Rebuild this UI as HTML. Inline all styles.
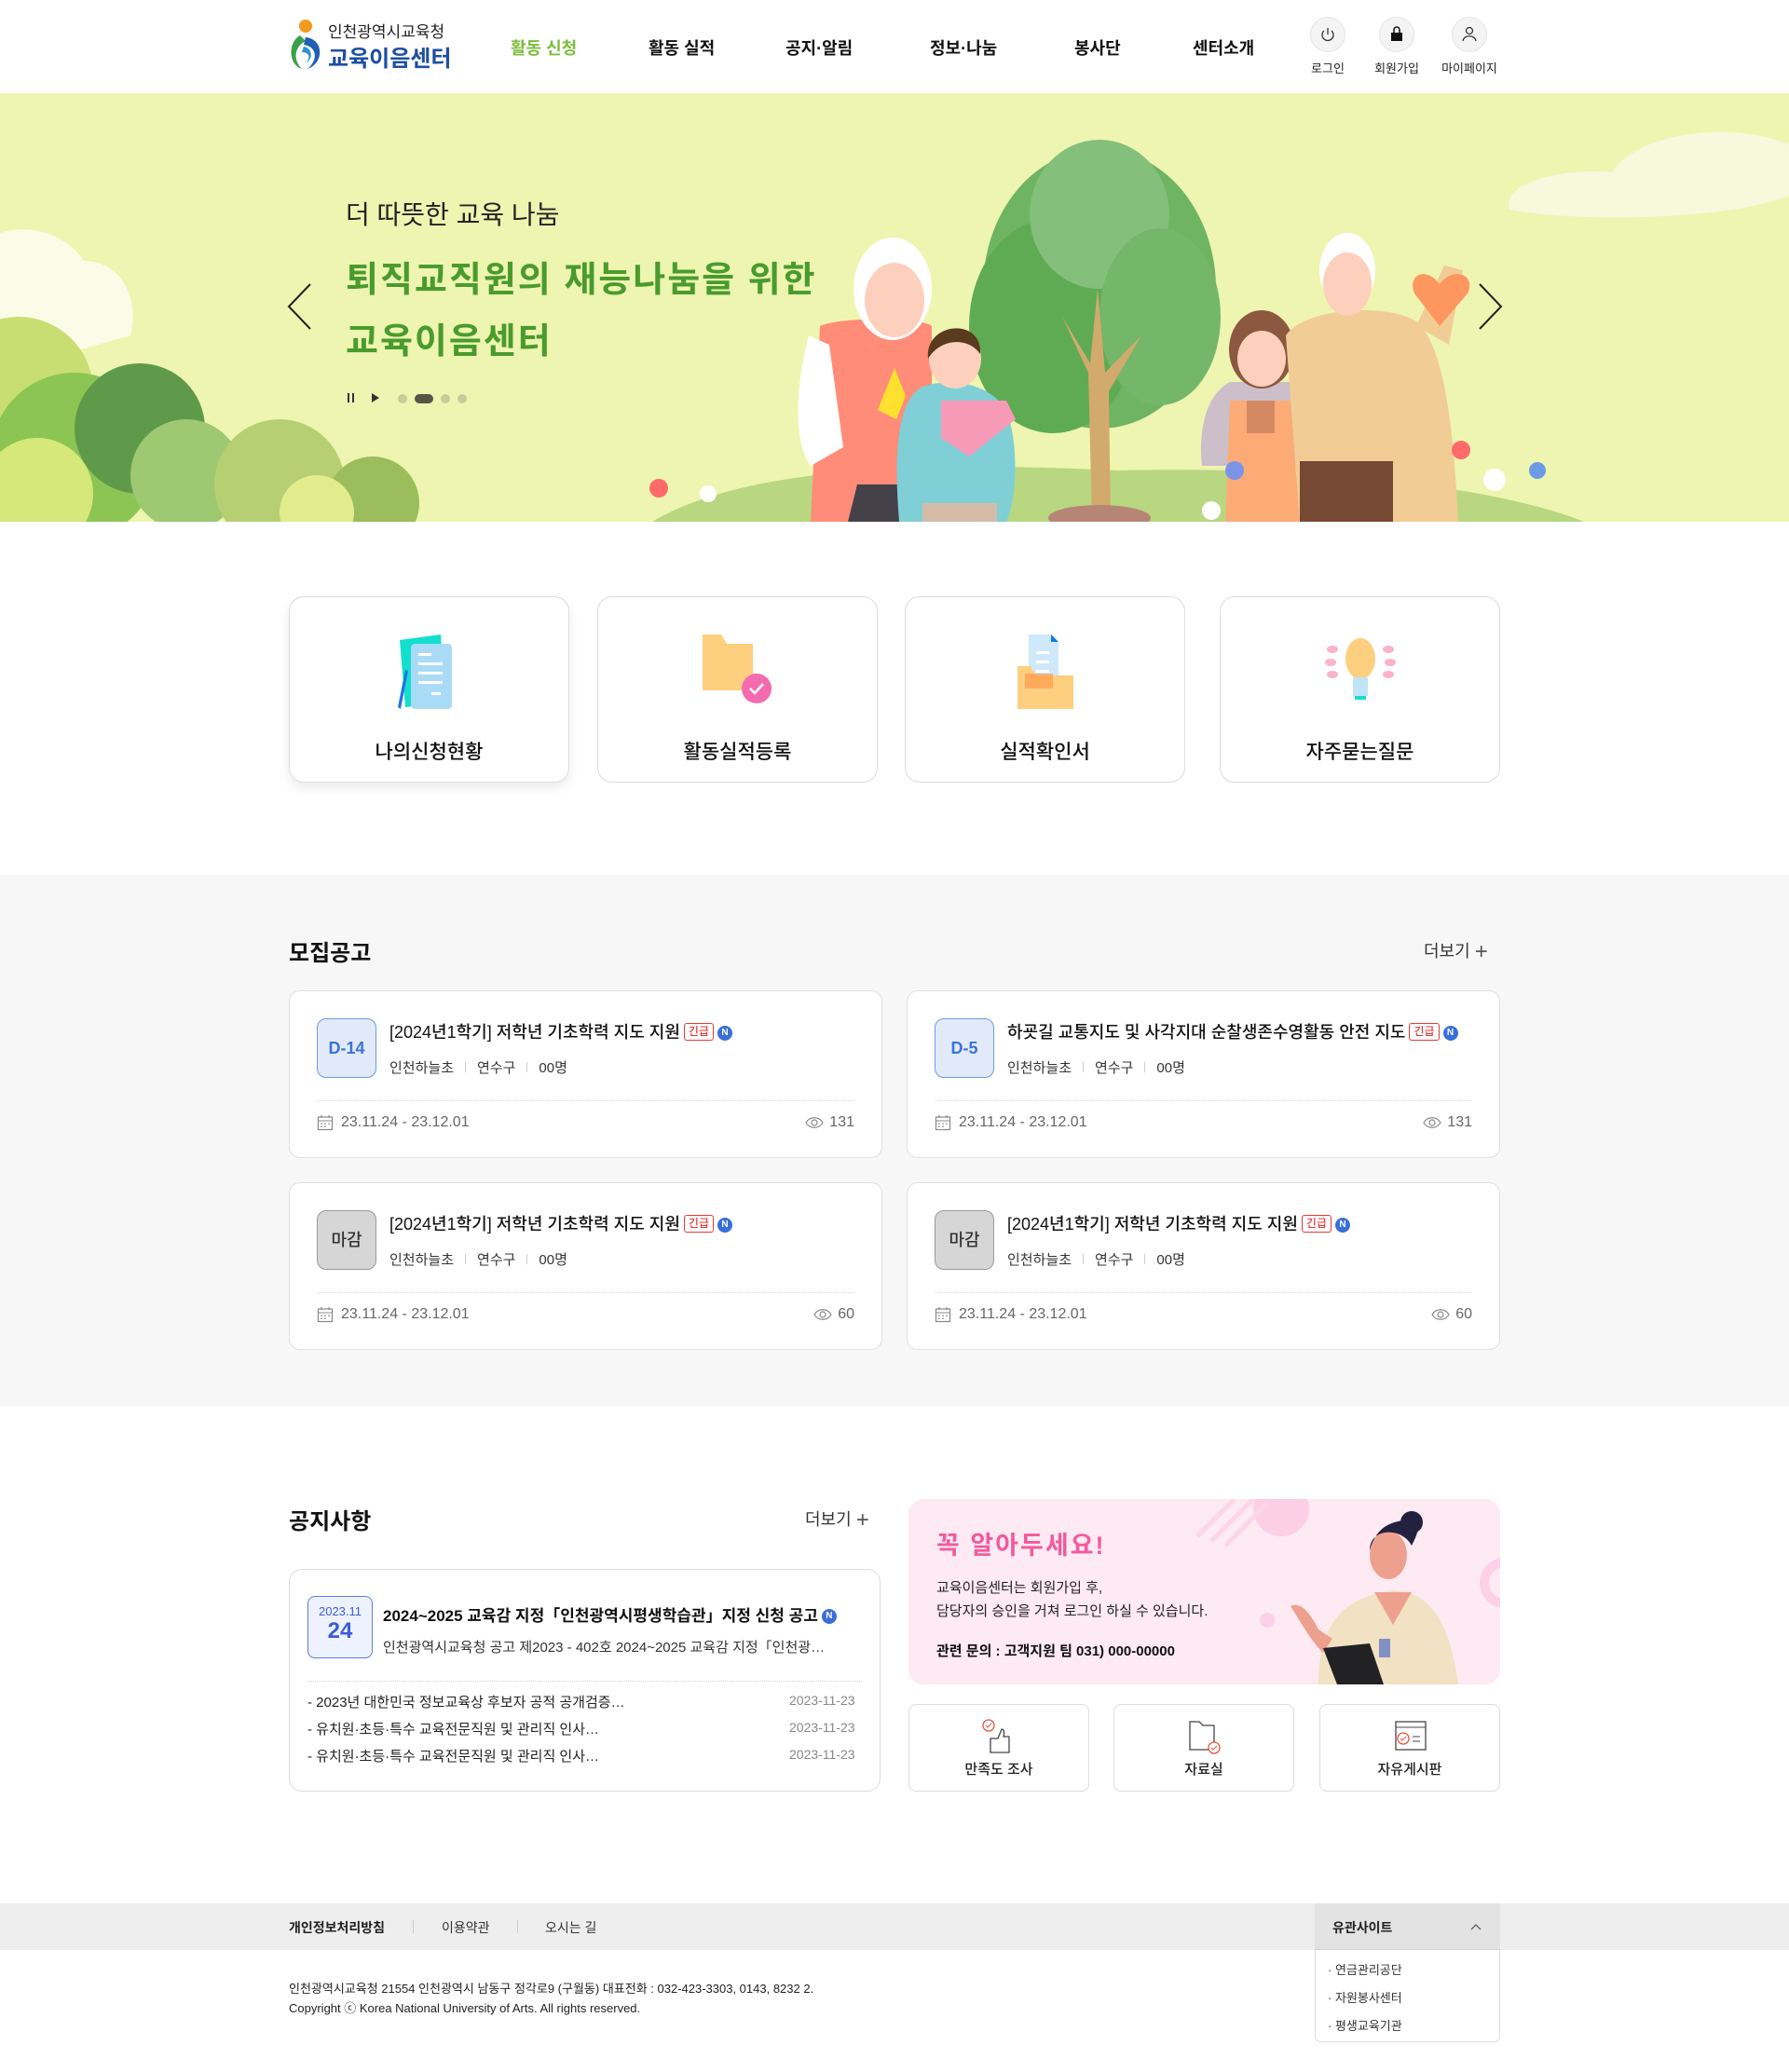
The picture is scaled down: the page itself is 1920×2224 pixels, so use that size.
<!DOCTYPE html>
<html lang="ko"><head><meta charset="utf-8">
<style>
*{margin:0;padding:0;box-sizing:border-box}
body{width:1920px;height:2224px;background:#fff;font-family:"Liberation Sans","Noto Sans CJK KR",sans-serif;color:#222;position:relative;overflow:hidden}
.a{position:absolute}
.nav{font-size:18px;font-weight:700;color:#111;top:38px}
.ic{width:38px;height:38px;border-radius:50%;background:#f4f4f4;border:1px solid #e4e4e4;top:18px}
.icl{font-size:13px;color:#222;top:63px;width:80px;text-align:center}
.qc{top:640px;width:301px;height:200px;border:1px solid #dcdcdc;border-radius:16px;background:#fff}
.qc span{position:absolute;top:150px;left:0;width:100%;text-align:center;font-size:21px;font-weight:500;color:#111}
.rc{width:637px;height:180px;background:#fff;border:1px solid #e0e0e0;border-radius:12px}
.bd{position:absolute;left:29px;top:29px;width:64px;height:64px;border-radius:10px;text-align:center;line-height:62px;font-size:18px;font-weight:700}
.dl{background:#e2eaf9;border:1px solid #6e9ae0;color:#3b74d6}
.mg{background:#d6d6d6;border:1px solid #9a9a9a;color:#333;font-weight:500}
.rt{position:absolute;left:107px;top:30px;font-size:18px;font-weight:500;color:#111;white-space:nowrap}
.ug{display:inline-block;font-size:12px;color:#e53935;border:1px solid #e53935;border-radius:3px;padding:0 4px;line-height:17px;margin-left:4px;vertical-align:3px}
.nb{display:inline-block;width:16px;height:16px;border-radius:50%;background:#3a6fd8;color:#fff;font-size:10px;font-weight:700;text-align:center;line-height:16px;margin-left:4px;vertical-align:3px}
.rm{position:absolute;left:107px;top:71px;font-size:15px;color:#333}
.rm i{display:inline-block;width:1px;height:11px;background:#ccc;margin:0 12px}
.rl{position:absolute;left:29px;right:29px;top:117px;border-top:1px dotted #d6d6d6}
.rd{position:absolute;left:29px;top:132px;font-size:16px;color:#666;display:flex;align-items:center;gap:8px}
.rv{position:absolute;right:29px;top:132px;font-size:16px;color:#666;display:flex;align-items:center;gap:6px}
.sb{top:1829px;width:194px;height:94px;border:1px solid #dcdcdc;border-radius:8px;background:#fff}
.sb span{position:absolute;top:58px;width:100%;text-align:center;font-size:15px;font-weight:500}
.li{left:330px;font-size:15px;color:#222}
.ld{left:847px;font-size:14px;color:#888}
</style></head><body>

<svg width="0" height="0" style="position:absolute"><defs>
<symbol id="cal" viewBox="0 0 18 18"><rect x="1.5" y="3" width="15" height="13.5" fill="none" stroke="#888" stroke-width="1.2"/><line x1="1.5" y1="7" x2="16.5" y2="7" stroke="#888"/><line x1="5" y1="1" x2="5" y2="4" stroke="#888" stroke-width="1.2"/><line x1="13" y1="1" x2="13" y2="4" stroke="#888" stroke-width="1.2"/><g fill="#aaa"><rect x="4" y="9.5" width="2" height="1.5"/><rect x="8" y="9.5" width="2" height="1.5"/><rect x="12" y="9.5" width="2" height="1.5"/><rect x="4" y="12.5" width="2" height="1.5"/><rect x="8" y="12.5" width="2" height="1.5"/></g></symbol>
<symbol id="eye" viewBox="0 0 20 14"><path d="M1 7 C5 0 15 0 19 7 C15 14 5 14 1 7Z" fill="none" stroke="#888" stroke-width="1.2"/><circle cx="10" cy="7" r="3" fill="none" stroke="#888" stroke-width="1.2"/></symbol>
</defs></svg>

<!-- header -->
<svg class="a" style="left:308px;top:20px" width="40" height="58" viewBox="0 0 40 58">
<circle cx="20" cy="8" r="7" fill="#f39a1e"/>
<path d="M14 18 C0 26 2 50 16 54 C6 44 8 30 20 24 Z" fill="#3aa04a"/>
<path d="M20 20 C40 22 40 48 22 54 C34 44 32 30 18 28 Z" fill="#1f5fb5"/>
<path d="M18 30 C28 32 28 44 20 48 C26 42 24 36 16 36Z" fill="#2b8fd2"/>
</svg>
<div class="a" style="left:352px;top:20px;font-size:17px;color:#222">인천광역시교육청</div>
<div class="a" style="left:352px;top:43px;font-size:24px;font-weight:700;color:#1d4fa3">교육이음센터</div>
<div class="a nav" style="left:548px;color:#7bbd3c">활동 신청</div>
<div class="a nav" style="left:696px">활동 실적</div>
<div class="a nav" style="left:843px">공지·알림</div>
<div class="a nav" style="left:998px">정보·나눔</div>
<div class="a nav" style="left:1153px">봉사단</div>
<div class="a nav" style="left:1280px">센터소개</div>
<div class="a ic" style="left:1406px"><svg width="36" height="36" viewBox="0 0 36 36"><path d="M14 14 A6 6 0 1 0 22 14" fill="none" stroke="#333" stroke-width="1.3"/><line x1="18" y1="11" x2="18" y2="18" stroke="#333" stroke-width="1.3"/></svg></div>
<div class="a ic" style="left:1480px"><svg width="36" height="36" viewBox="0 0 36 36"><path d="M15 16 V13 a3 3 0 0 1 6 0 V16" fill="none" stroke="#111" stroke-width="1.5"/><rect x="12" y="16" width="12" height="9" fill="#111"/></svg></div>
<div class="a ic" style="left:1558px"><svg width="36" height="36" viewBox="0 0 36 36"><circle cx="18" cy="14" r="3.5" fill="none" stroke="#333" stroke-width="1.3"/><path d="M11 25 C12 18 24 18 25 25" fill="none" stroke="#333" stroke-width="1.3"/></svg></div>
<div class="a icl" style="left:1385px">로그인</div>
<div class="a icl" style="left:1459px">회원가입</div>
<div class="a icl" style="left:1537px">마이페이지</div>

<!-- hero -->
<svg class="a" style="left:0;top:100px" width="1920" height="460" viewBox="0 0 1920 460">
<rect width="1920" height="460" fill="#eef5b0"/>
<path d="M1620 125 C1610 95 1680 80 1730 85 C1760 40 1860 30 1920 55 V110 C1860 135 1700 140 1620 125Z" fill="#f6f9dc"/>
<path d="M0 150 C30 140 70 150 90 180 C130 180 150 220 140 260 L0 300Z" fill="#fbfce8"/>
<circle cx="20" cy="320" r="80" fill="#c9de72"/>
<circle cx="80" cy="390" r="90" fill="#8cc554"/>
<circle cx="150" cy="360" r="70" fill="#5e9a4a"/>
<circle cx="200" cy="410" r="60" fill="#9ec872"/>
<circle cx="300" cy="420" r="70" fill="#b6cf72"/>
<circle cx="40" cy="430" r="60" fill="#d6e87a"/>
<circle cx="400" cy="440" r="50" fill="#9bbd5c"/>
<circle cx="340" cy="450" r="40" fill="#e2ec8c"/>
<path d="M700 460 C800 400 1000 395 1200 405 C1400 400 1600 420 1700 460Z" fill="#b8d780"/>
<!-- tree -->
<ellipse cx="1180" cy="210" rx="125" ry="150" fill="#6eb463"/>
<ellipse cx="1130" cy="250" rx="90" ry="115" fill="#5fab54"/>
<ellipse cx="1180" cy="130" rx="75" ry="80" fill="#84bf7b"/>
<ellipse cx="1245" cy="240" rx="65" ry="95" fill="#74b76a"/>
<path d="M1172 460 L1168 300 L1140 240 L1170 290 L1178 210 L1186 300 L1225 260 L1190 320 L1192 460Z" fill="#d3aa6d"/>
<ellipse cx="1180" cy="456" rx="55" ry="14" fill="#b58676"/>
<!-- grandma -->
<path d="M870 460 L880 250 C900 240 990 240 1000 250 L1000 460Z" fill="#ff8c78"/>
<path d="M868 260 C850 330 855 380 870 400 L905 380 L890 270Z" fill="#fff"/>
<ellipse cx="958" cy="210" rx="42" ry="55" fill="#fff"/>
<ellipse cx="960" cy="222" rx="32" ry="40" fill="#fcd0bd"/>
<path d="M920 420 L1000 420 L1000 460 L910 460Z" fill="#444149"/>
<path d="M960 295 l12 30 l-10 25 l-20 -10Z" fill="#fee12e"/>
<!-- boy -->
<path d="M965 460 C960 400 960 330 990 315 C1020 305 1060 310 1080 340 C1095 380 1090 440 1080 460Z" fill="#80cfd6"/>
<ellipse cx="1025" cy="285" rx="28" ry="32" fill="#fcd0bd"/>
<path d="M996 285 C992 245 1055 240 1052 280 C1040 262 1010 262 996 285Z" fill="#5a3b1d"/>
<path d="M1010 330 L1080 330 L1090 350 L1040 390 L1010 370Z" fill="#f79ab8"/>
<rect x="990" y="440" width="80" height="20" fill="#d3bba8"/>
<!-- girl -->
<path d="M1290 400 C1285 350 1300 320 1320 310 L1390 310 C1415 320 1420 360 1415 400Z" fill="#cdbfc9"/>
<path d="M1320 330 L1385 330 L1395 460 L1315 460Z" fill="#fcab76"/>
<ellipse cx="1354" cy="275" rx="35" ry="42" fill="#8c5840"/>
<ellipse cx="1354" cy="285" rx="26" ry="30" fill="#fcd0bd"/>
<rect x="1338" y="330" width="30" height="35" fill="#d48963"/>
<!-- grandpa -->
<path d="M1395 460 L1380 260 C1400 230 1490 225 1520 245 C1550 270 1560 360 1565 460Z" fill="#f2cc95"/>
<rect x="1395" y="395" width="100" height="65" fill="#764934"/>
<path d="M1520 250 L1555 270 L1570 190 L1550 185Z" fill="#f2cc95"/>
<ellipse cx="1446" cy="190" rx="30" ry="40" fill="#fff"/>
<ellipse cx="1446" cy="205" rx="26" ry="34" fill="#fcd0bd"/>
<path d="M1545 205 C1530 185 1510 195 1518 215 L1545 250 L1575 215 C1585 195 1560 185 1545 205Z" fill="#fe9660"/>
<!-- flowers -->
<circle cx="707" cy="424" r="10" fill="#ff6b6b"/><circle cx="760" cy="430" r="9" fill="#fff"/>
<circle cx="1325" cy="405" r="10" fill="#7a94ea"/><circle cx="1300" cy="448" r="10" fill="#fff"/>
<circle cx="1568" cy="383" r="10" fill="#ff6b6b"/><circle cx="1604" cy="415" r="12" fill="#fff"/><circle cx="1650" cy="405" r="9" fill="#6d9ae5"/>
<!-- arrows -->
<path d="M333 205 L310 229 L333 253" fill="none" stroke="#222" stroke-width="2"/>
<path d="M1588 205 L1611 229 L1588 253" fill="none" stroke="#222" stroke-width="2"/>
<!-- controls -->
<rect x="373" y="322" width="2" height="10" fill="#333"/><rect x="378" y="322" width="2" height="10" fill="#333"/>
<path d="M399 322 L407 327 L399 332Z" fill="#333"/>
<circle cx="432" cy="328" r="5" fill="#c8cc9a"/><rect x="445" y="323" width="20" height="10" rx="5" fill="#555647"/>
<circle cx="478" cy="328" r="5" fill="#c8cc9a"/><circle cx="496" cy="328" r="5" fill="#c8cc9a"/>
</svg>
<div class="a" style="left:371px;top:209px;font-size:28px;color:#222">더 따뜻한 교육 나눔</div>
<div class="a" style="left:371px;top:268px;font-size:38px;font-weight:700;color:#4a9b2e;line-height:66px;letter-spacing:2px">퇴직교직원의 재능나눔을 위한<br>교육이음센터</div>

<!-- quick -->
<div class="a qc" style="left:310px;box-shadow:0 6px 12px rgba(0,0,0,.08)">
<svg class="a" style="left:110px;top:38px" width="80" height="86" viewBox="0 0 80 86"><path d="M8 8 L52 2 L56 76 L14 80Z" fill="#12dfce"/><rect x="20" y="12" width="44" height="70" rx="4" fill="#aadbf6"/><g fill="#fff"><rect x="28" y="22" width="14" height="3"/><rect x="28" y="32" width="26" height="3"/><rect x="28" y="42" width="26" height="3"/><rect x="28" y="52" width="26" height="3"/><rect x="42" y="64" width="10" height="3"/></g><path d="M6 80 L14 40 L17 41 L9 82Z" fill="#1f73e8"/></svg>
<span>나의신청현황</span></div>
<div class="a qc" style="left:641px">
<svg class="a" style="left:110px;top:38px" width="82" height="86" viewBox="0 0 82 86"><path d="M2 2 H22 L28 12 H56 V62 H2Z" fill="#fecf7f"/><circle cx="60" cy="60" r="16" fill="#f56bb0"/><path d="M53 60 l5 5 l9 -10" stroke="#fff" stroke-width="2.5" fill="none"/></svg>
<span>활동실적등록</span></div>
<div class="a qc" style="left:971px">
<svg class="a" style="left:118px;top:38px" width="70" height="86" viewBox="0 0 70 86"><path d="M14 2 H38 L46 10 V50 H14Z" fill="#cfe9fb"/><path d="M38 2 L46 10 H38Z" fill="#0a7be8"/><g fill="#fff"><rect x="22" y="20" width="14" height="3"/><rect x="22" y="30" width="14" height="3"/><rect x="22" y="40" width="14" height="3"/></g><path d="M2 36 H16 L22 46 H62 V82 H2Z" fill="#fecf7f"/><rect x="10" y="44" width="30" height="16" fill="#ff9a4a" opacity=".7"/></svg>
<span>실적확인서</span></div>
<div class="a qc" style="left:1309px">
<svg class="a" style="left:108px;top:38px" width="84" height="86" viewBox="0 0 84 86"><ellipse cx="42" cy="28" rx="16" ry="22" fill="#fecf7f"/><rect x="34" y="48" width="16" height="20" fill="#bfe4f7"/><rect x="36" y="68" width="12" height="4" fill="#12dfce"/><g fill="#fbb3c9"><ellipse cx="12" cy="18" rx="6" ry="4"/><ellipse cx="10" cy="32" rx="6" ry="4"/><ellipse cx="12" cy="45" rx="6" ry="4"/><ellipse cx="72" cy="18" rx="6" ry="4"/><ellipse cx="74" cy="32" rx="6" ry="4"/><ellipse cx="72" cy="45" rx="6" ry="4"/></g></svg>
<span>자주묻는질문</span></div>

<!-- recruit -->
<div class="a" style="left:0;top:939px;width:1920px;height:570px;background:#f7f7f7"></div>
<div class="a" style="left:310px;top:1003px;font-size:24px;font-weight:700;color:#111">모집공고</div>
<div class="a" style="left:1528px;top:1007px;font-size:18px;color:#333">더보기 <span style="font-size:24px;font-weight:300;vertical-align:-2px;color:#555">+</span></div>

<div class="a rc" style="left:310px;top:1063px"><div class="bd dl">D-14</div><div class="rt">[2024년1학기] 저학년 기초학력 지도 지원<span class="ug">긴급</span><span class="nb">N</span></div><div class="rm">인천하늘초<i></i>연수구<i></i>00명</div><div class="rl"></div><div class="rd"><svg width="18" height="18"><use href="#cal"/></svg>23.11.24 - 23.12.01</div><div class="rv"><svg width="20" height="14"><use href="#eye"/></svg>131</div></div>
<div class="a rc" style="left:973px;top:1063px"><div class="bd dl">D-5</div><div class="rt">하굣길 교통지도 및 사각지대 순찰생존수영활동 안전 지도<span class="ug">긴급</span><span class="nb">N</span></div><div class="rm">인천하늘초<i></i>연수구<i></i>00명</div><div class="rl"></div><div class="rd"><svg width="18" height="18"><use href="#cal"/></svg>23.11.24 - 23.12.01</div><div class="rv"><svg width="20" height="14"><use href="#eye"/></svg>131</div></div>
<div class="a rc" style="left:310px;top:1269px"><div class="bd mg">마감</div><div class="rt">[2024년1학기] 저학년 기초학력 지도 지원<span class="ug">긴급</span><span class="nb">N</span></div><div class="rm">인천하늘초<i></i>연수구<i></i>00명</div><div class="rl"></div><div class="rd"><svg width="18" height="18"><use href="#cal"/></svg>23.11.24 - 23.12.01</div><div class="rv"><svg width="20" height="14"><use href="#eye"/></svg>60</div></div>
<div class="a rc" style="left:973px;top:1269px"><div class="bd mg">마감</div><div class="rt">[2024년1학기] 저학년 기초학력 지도 지원<span class="ug">긴급</span><span class="nb">N</span></div><div class="rm">인천하늘초<i></i>연수구<i></i>00명</div><div class="rl"></div><div class="rd"><svg width="18" height="18"><use href="#cal"/></svg>23.11.24 - 23.12.01</div><div class="rv"><svg width="20" height="14"><use href="#eye"/></svg>60</div></div>

<!-- notice -->
<div class="a" style="left:310px;top:1613px;font-size:24px;font-weight:700;color:#111">공지사항</div>
<div class="a" style="left:864px;top:1617px;font-size:18px;color:#333">더보기 <span style="font-size:24px;font-weight:300;vertical-align:-2px;color:#555">+</span></div>
<div class="a" style="left:310px;top:1684px;width:635px;height:239px;border:1px solid #dcdcdc;border-radius:14px;background:#fff"></div>
<div class="a" style="left:330px;top:1713px;width:70px;height:67px;border:1px solid #5a7ee0;border-radius:8px;background:#eef2fe;text-align:center;color:#3a5bd9">
<div style="font-size:13px;margin-top:8px">2023.11</div><div style="font-size:24px;font-weight:700;line-height:28px">24</div></div>
<div class="a" style="left:411px;top:1720px;font-size:17px;font-weight:700;color:#111;white-space:nowrap">2024~2025 교육감 지정「인천광역시평생학습관」지정 신청 공고<span class="nb">N</span></div>
<div class="a" style="left:411px;top:1757px;font-size:15px;color:#333;white-space:nowrap">인천광역시교육청 공고 제2023 - 402호 2024~2025 교육감 지정「인천광…</div>
<div class="a" style="left:330px;top:1804px;width:595px;border-top:1px dotted #d0d0d0"></div>
<div class="a li" style="top:1816px">- 2023년 대한민국 정보교육상 후보자 공적 공개검증…</div><div class="a ld" style="top:1817px">2023-11-23</div>
<div class="a li" style="top:1845px">- 유치원·초등·특수 교육전문직원 및 관리직 인사…</div><div class="a ld" style="top:1846px">2023-11-23</div>
<div class="a li" style="top:1874px">- 유치원·초등·특수 교육전문직원 및 관리직 인사…</div><div class="a ld" style="top:1875px">2023-11-23</div>

<div class="a" style="left:975px;top:1609px;width:635px;height:199px;border-radius:16px;background:#fdeaf2;overflow:hidden">
<svg class="a" style="left:0;top:0" width="635" height="199" viewBox="0 0 635 199">
<circle cx="400" cy="10" r="30" fill="#fccfe6"/><g stroke="#fcd6e6" stroke-width="5"><line x1="310" y1="40" x2="350" y2="0"/><line x1="325" y1="45" x2="370" y2="0"/><line x1="340" y1="50" x2="385" y2="5"/></g>
<circle cx="640" cy="90" r="22" fill="none" stroke="#fcd0e6" stroke-width="10"/><circle cx="385" cy="130" r="8" fill="#fcd0e6"/>
<path d="M440 199 C440 130 470 105 520 98 C560 100 580 130 590 199Z" fill="#f2e2c3"/>
<path d="M500 100 L520 135 L540 100Z" fill="#eea08e"/>
<path d="M410 115 C420 110 430 120 440 140 L455 150 L445 165 C430 150 420 130 410 115Z" fill="#eea08e"/>
<ellipse cx="515" cy="60" rx="20" ry="26" fill="#eea08e"/>
<path d="M495 55 C495 30 530 30 540 50 C545 40 550 30 545 20 C530 25 505 20 495 55Z" fill="#23213f"/>
<circle cx="540" cy="25" r="12" fill="#23213f"/>
<path d="M445 160 L495 155 L510 199 L460 199Z" fill="#222225"/>
<rect x="505" y="150" width="12" height="20" fill="#8090c4"/>
</svg>
<div class="a" style="left:30px;top:28px;font-size:27px;font-weight:700;color:#f25a9e;letter-spacing:2px">꼭 알아두세요!</div>
<div class="a" style="left:30px;top:83px;font-size:15px;color:#222;line-height:25px">교육이음센터는 회원가입 후,<br>담당자의 승인을 거쳐 로그인 하실 수 있습니다.</div>
<div class="a" style="left:30px;top:152px;font-size:15px;font-weight:700;color:#111">관련 문의 : 고객지원 팀 031) 000-00000</div>
</div>

<div class="a sb" style="left:975px"><svg class="a" style="left:75px;top:14px" width="44" height="40" viewBox="0 0 44 40"><circle cx="10" cy="8" r="6" fill="none" stroke="#e8543a" stroke-width="1.3"/><path d="M7 8 l2 2 l4 -4" stroke="#e8543a" fill="none"/><path d="M12 22 H20 L24 12 C27 12 27 16 26 20 H32 V37 H12Z" fill="none" stroke="#444" stroke-width="1.3"/></svg><span>만족도 조사</span></div>
<div class="a sb" style="left:1195px"><svg class="a" style="left:75px;top:14px" width="44" height="40" viewBox="0 0 44 40"><path d="M6 4 H16 L20 8 H32 V34 H6Z" fill="none" stroke="#444" stroke-width="1.3"/><circle cx="32" cy="32" r="6" fill="#fff" stroke="#e8543a" stroke-width="1.3"/><path d="M29 32 l2 2 l4 -4" stroke="#e8543a" fill="none"/></svg><span>자료실</span></div>
<div class="a sb" style="left:1416px"><svg class="a" style="left:75px;top:14px" width="44" height="40" viewBox="0 0 44 40"><rect x="6" y="4" width="32" height="30" fill="none" stroke="#444" stroke-width="1.3"/><line x1="6" y1="10" x2="38" y2="10" stroke="#444"/><circle cx="14" cy="22" r="6" fill="none" stroke="#e8543a" stroke-width="1.3"/><path d="M11 22 l2 2 l4 -4" stroke="#e8543a" fill="none"/><line x1="24" y1="20" x2="32" y2="20" stroke="#444"/><line x1="24" y1="25" x2="32" y2="25" stroke="#444"/></svg><span>자유게시판</span></div>

<!-- footer -->
<div class="a" style="left:0;top:2043px;width:1920px;height:50px;background:#eeeeee"></div>
<div class="a" style="left:310px;top:2059px;font-size:14px;font-weight:700;color:#222">개인정보처리방침</div>
<div class="a" style="left:443px;top:2061px;width:1px;height:14px;background:#ccc"></div>
<div class="a" style="left:474px;top:2059px;font-size:14px;color:#333">이용약관</div>
<div class="a" style="left:555px;top:2061px;width:1px;height:14px;background:#ccc"></div>
<div class="a" style="left:585px;top:2059px;font-size:14px;color:#333">오시는 길</div>
<div class="a" style="left:1411px;top:2043px;width:199px;height:50px;background:#e3e3e3;border-bottom:1px solid #d0d0d0"></div>
<div class="a" style="left:1430px;top:2059px;font-size:14px;font-weight:700;color:#222">유관사이트</div>
<svg class="a" style="left:1578px;top:2063px" width="12" height="10"><path d="M1 8 L6 3 L11 8" fill="none" stroke="#444"/></svg>
<div class="a" style="left:1411px;top:2093px;width:199px;height:99px;background:#fff;border:1px solid #ddd;border-top:none;border-radius:0 0 6px 6px"></div>
<div class="a" style="left:1425px;top:2100px;font-size:13px;color:#333;line-height:30px">· 연금관리공단<br>· 자원봉사센터<br>· 평생교육기관</div>
<div class="a" style="left:310px;top:2124px;font-size:13px;color:#222;line-height:21px">인천광역시교육청 21554 인천광역시 남동구 정각로9 (구월동) 대표전화 : 032-423-3303, 0143, 8232 2.<br>Copyright ⓒ Korea National University of Arts. All rights reserved.</div>
</body></html>
